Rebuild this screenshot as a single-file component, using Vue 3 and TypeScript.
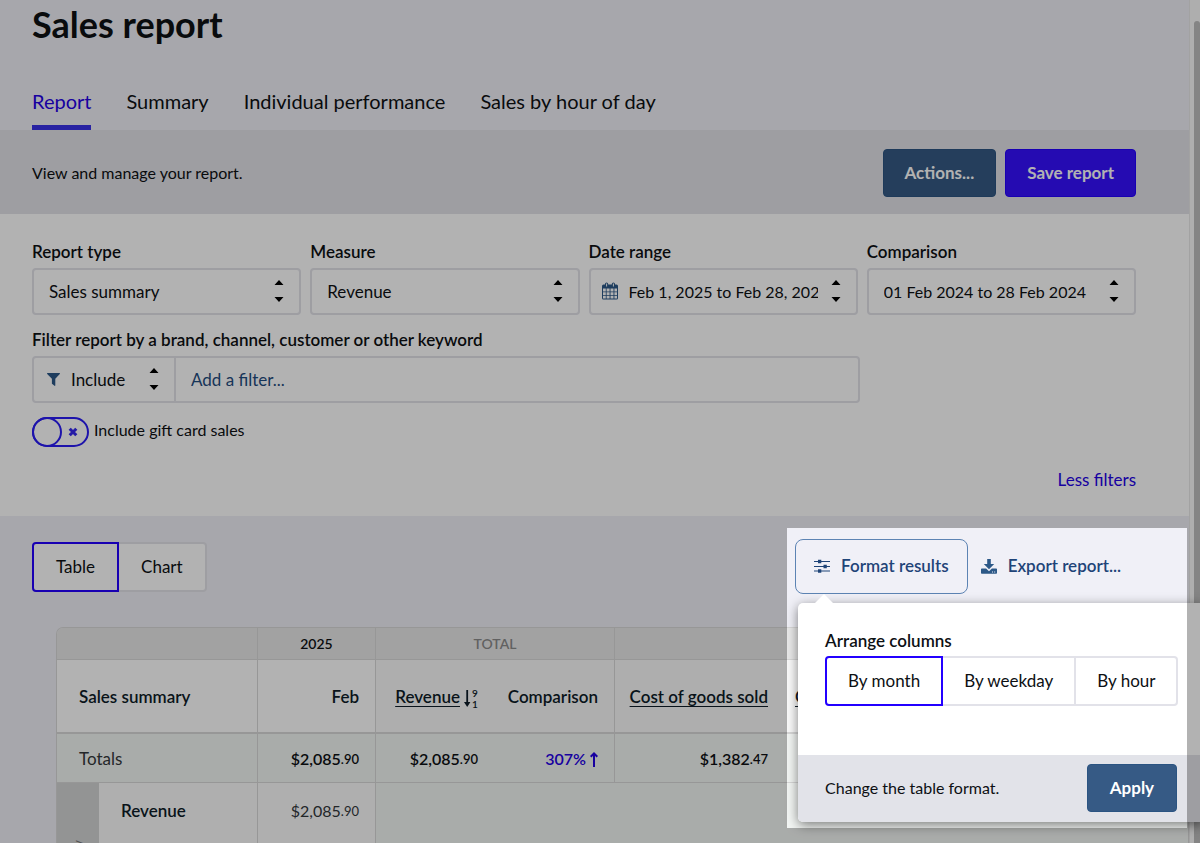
<script setup lang="ts">
import { ref } from 'vue'

const tabs = ['Report', 'Summary', 'Individual performance', 'Sales by hour of day']
const activeTab = ref('Report')
const reportType = ref('Sales summary')
const measure = ref('Revenue')
const dateRange = ref('Feb 1, 2025 to Feb 28, 2025')
const comparison = ref('01 Feb 2024 to 28 Feb 2024')
const filterMode = ref('Include')
const filterText = ref('')
const giftCards = ref(false)
const view = ref('Table')
const arrange = ref('By month')
</script>

<template>
  <div class="app">
    <main class="page">
      <header class="top">
        <h1>Sales report</h1>
        <nav class="tabs">
          <a v-for="t in tabs" :key="t" href="#" :class="{ active: t === activeTab }" @click.prevent="activeTab = t">{{ t }}</a>
        </nav>
      </header>

      <section class="band">
        <p>View and manage your report.</p>
        <div class="band-actions">
          <button class="btn navy" type="button">Actions...</button>
          <button class="btn blue" type="button">Save report</button>
        </div>
      </section>

      <form class="filters" @submit.prevent>
        <div class="fields">
          <div class="field">
            <label for="type">Report type</label>
            <div class="control">
              <select id="type" v-model="reportType"><option>Sales summary</option></select>
              <svg class="arrows" viewBox="0 0 10 24"><path d="M5 1l4.5 5h-9zM5 23l4.5-5h-9z" /></svg>
            </div>
          </div>
          <div class="field">
            <label for="measure">Measure</label>
            <div class="control">
              <select id="measure" v-model="measure"><option>Revenue</option></select>
              <svg class="arrows" viewBox="0 0 10 24"><path d="M5 1l4.5 5h-9zM5 23l4.5-5h-9z" /></svg>
            </div>
          </div>
          <div class="field">
            <label for="range">Date range</label>
            <div class="control dated">
              <svg class="calendar" viewBox="0 0 16 18">
                <path fill-rule="evenodd" d="M1.5 2.5H3V2a1.6 1.6 0 0 1 3.200 0v.5h3.600V2a1.600 1.600 0 0 1 3.200 0v.5h1.500A1.500 1.500 0 0 1 16 4v12a1.500 1.500 0 0 1-1.500 1.500h-13A1.500 1.500 0 0 1 0 16V4a1.500 1.500 0 0 1 1.500-1.500zM1 6.500v3h2.800v-3zm3.600 0v3h3v-3zm3.900 0v3h3v-3zm3.900 0v3H15v-3zM1 10.200V13h2.800v-2.800zm3.600 0V13h3v-2.800zm3.900 0V13h3v-2.800zm3.900 0V13H15v-2.800zM1 13.800v2.700h2.800v-2.700zm3.600 0v2.700h3v-2.700zm3.900 0v2.700h3v-2.700zm3.900 0v2.700H15v-2.700zM4.100 1.600v3h1v-3zm6.800 0v3h1v-3z" />
              </svg>
              <input id="range" v-model="dateRange" type="text" />
              <svg class="arrows" viewBox="0 0 10 24"><path d="M5 1l4.500 5h-9zM5 23l4.500-5h-9z" /></svg>
            </div>
          </div>
          <div class="field">
            <label for="compare">Comparison</label>
            <div class="control compared">
              <select id="compare" v-model="comparison"><option>01 Feb 2024 to 28 Feb 2024</option></select>
              <svg class="arrows" viewBox="0 0 10 24"><path d="M5 1l4.500 5h-9zM5 23l4.500-5h-9z" /></svg>
            </div>
          </div>
        </div>

        <div class="field keyword">
          <label for="keyword">Filter report by a brand, channel, customer or other keyword</label>
          <div class="joined">
            <div class="control mode">
              <svg class="funnel" viewBox="0 0 13 13"><path d="M.4 0h12.200q.6.4.2 1L8.300 5.800V12.500q-.2.700-.8.300L4.900 10.800V5.800L.2 1Q-.2.400.4 0z" /></svg>
              <select v-model="filterMode" aria-label="Filter mode"><option>Include</option><option>Exclude</option></select>
              <svg class="arrows" viewBox="0 0 10 24"><path d="M5 1l4.500 5h-9zM5 23l4.500-5h-9z" /></svg>
            </div>
            <input id="keyword" v-model="filterText" class="text" type="text" placeholder="Add a filter..." />
          </div>
        </div>

        <label class="toggle">
          <input v-model="giftCards" type="checkbox" />
          <span class="track">
            <span class="knob"></span>
            <svg viewBox="0 0 10 10"><path d="M1.700 1.700l6.600 6.600M8.300 1.700L1.700 8.300" /></svg>
          </span>
          <span class="caption">Include gift card sales</span>
        </label>

        <a class="less" href="#" @click.prevent>Less filters</a>
      </form>

      <section class="results">
        <div class="toolbar">
          <div class="segments">
            <button v-for="v in ['Table', 'Chart']" :key="v" type="button" :class="{ on: v === view }" @click="view = v">{{ v }}</button>
          </div>
          <div class="tools">
            <button class="format" type="button">
              <svg viewBox="0 0 16 14">
                <path d="M0 2.500h16M0 7.500h16M0 12h16" fill="none" stroke="currentColor" stroke-width="1" />
                <path d="M4 .8h3.300v3.400H4zM9.500 5.800h3.300v3.400H9.500zM4 10.300h3.300v3.400H4z" />
              </svg>
              Format results
            </button>
            <button class="export" type="button">
              <svg viewBox="0 0 16 15">
                <path d="M6.200 0h3.600v5h3.400L8 10.200 2.800 5h3.400z" />
                <path fill-rule="evenodd" d="M.8 9.500h4.300L8 12.200l2.900-2.700h4.300q.8 0 .8.800v3.600q0 .8-.8.800H.8q-.8 0-.8-.8v-3.600q0-.8.800-.8zM11 12.400v1h1v-1zm2.200 0v1h1v-1z" />
              </svg>
              Export report...
            </button>
            <div class="popover" role="dialog" aria-label="Format results">
              <div class="popover-body">
                <h2>Arrange columns</h2>
                <div class="segments">
                  <button v-for="a in ['By month', 'By weekday', 'By hour']" :key="a" type="button" :class="{ on: a === arrange }" @click="arrange = a">{{ a }}</button>
                </div>
              </div>
              <footer>
                <p>Change the table format.</p>
                <button class="btn apply" type="button">Apply</button>
              </footer>
            </div>
            <div class="spotlight"></div>
          </div>
        </div>

        <div class="table-wrap">
          <table>
            <colgroup>
              <col class="c-side" /><col class="c-name" /><col class="c-feb" /><col class="c-rev" /><col class="c-comp" /><col class="c-cost" /><col />
            </colgroup>
            <thead>
              <tr class="groups">
                <th colspan="2"></th>
                <th>2025</th>
                <th colspan="2" class="muted">TOTAL</th>
                <th colspan="2"></th>
              </tr>
              <tr class="heads">
                <th colspan="2" class="name">Sales summary</th>
                <th>Feb</th>
                <th class="tint open">
                  <a href="#" @click.prevent>Revenue</a>
                  <svg class="sort" viewBox="0 0 14 20">
                    <path d="M3.200 1v15" />
                    <path class="head" d="M0 13h6.400L3.200 18z" />
                    <text x="8" y="8">9</text><text x="8" y="19">1</text>
                  </svg>
                </th>
                <th class="tint">Comparison</th>
                <th class="tint open"><a href="#" @click.prevent>Cost of goods sold</a></th>
                <th class="tint left"><a href="#" @click.prevent>Gross profit</a></th>
              </tr>
            </thead>
            <tbody>
              <tr class="totals">
                <td colspan="2" class="name">Totals</td>
                <td>$2,085<small>.90</small></td>
                <td class="open">$2,085<small>.90</small></td>
                <td class="up">307%<svg viewBox="0 0 8 15"><path d="M4 15V2M.7 4.800L4 1.500l3.300 3.300" /></svg></td>
                <td class="open">$1,382<small>.47</small></td>
                <td></td>
              </tr>
              <tr class="detail">
                <th class="side"><span>Profitability</span></th>
                <th class="name">Revenue</th>
                <td>$2,085<small>.90</small></td>
                <td class="blank" colspan="4"></td>
              </tr>
            </tbody>
          </table>
        </div>
      </section>
    </main>
    <div class="scrollbar"><div class="thumb"></div></div>
  </div>
</template>

<style>
html,
body {
  overflow: hidden;
}
</style>

<style scoped>
* {
  box-sizing: border-box;
}
.app {
  display: grid;
  grid-template-columns: 1fr 11px;
  height: 100vh;
  overflow: hidden;
  background: #f0f0f7;
  color: #0d1013;
  font-family: Lato, "Liberation Sans", sans-serif;
  font-size: 17px;
  line-height: 24px;
}
h1,
h2,
p {
  margin: 0;
}
p,
.caption {
  font-size: 16px;
}
button,
input,
select {
  font: inherit;
  color: inherit;
}
a {
  color: inherit;
}
.page {
  min-width: 0;
}
.top {
  padding: 2px 32px 0;
}
h1 {
  font-size: 36px;
  line-height: 44px;
  font-weight: 700;
}
.tabs {
  display: flex;
  gap: 35px;
  margin-top: 38px;
}
.tabs a {
  height: 46px;
  font-size: 20px;
  line-height: 34px;
  text-decoration: none;
  border-bottom: 5px solid transparent;
}
.tabs a.active {
  color: #2300e6;
  border-color: #3a32e8;
}
.band {
  display: flex;
  align-items: center;
  justify-content: space-between;
  height: 84px;
  padding: 1px 53px 0 32px;
  background: #e2e2e8;
}
.band-actions {
  display: flex;
  gap: 9px;
}
.btn {
  height: 48px;
  padding: 0 21px;
  border: 1px solid;
  border-radius: 4px;
  color: #fff;
  font-weight: 700;
}
.navy,
.apply {
  background: #365a85;
  border-color: #2b5482;
}
.apply {
  padding: 0 22px;
}
.blue {
  background: #3511ff;
  border-color: #2300ff;
}
.filters {
  display: flex;
  flex-direction: column;
  height: 302px;
  padding: 26px 53px 0 32px;
  background: #fff;
}
.fields {
  display: grid;
  grid-template-columns: repeat(4, 1fr);
  gap: 9px;
}
.field label {
  display: block;
  height: 28px;
  font-weight: 600;
}
.control {
  position: relative;
}
.control select,
.control input,
.text {
  appearance: none;
  display: block;
  width: 100%;
  height: 47px;
  padding: 0 38px 0 15px;
  border: 2px solid #e2e2e9;
  border-radius: 4px;
  background: transparent;
  outline: none;
}
.control.dated input {
  padding-left: 38px;
  font-size: 16px;
}
.control.compared select {
  font-size: 16px;
}
.arrows {
  position: absolute;
  right: 17px;
  top: 11px;
  width: 10px;
  height: 24px;
  pointer-events: none;
}
.calendar,
.funnel {
  position: absolute;
  fill: #2c5887;
}
.calendar {
  left: 13px;
  top: 14px;
  width: 16px;
  height: 18px;
}
.funnel {
  left: 15px;
  top: 17px;
  width: 13px;
  height: 13px;
}
.keyword {
  width: 75%;
  margin-top: 13px;
}
.joined {
  display: flex;
}
.mode {
  flex: 0 0 144px;
}
.control.mode select {
  padding-left: 37px;
  border-radius: 4px 0 0 4px;
}
.text {
  flex: 1;
  margin-left: -2px;
  border-radius: 0 4px 4px 0;
}
.text::placeholder {
  color: #1f4c80;
  opacity: 1;
}
.toggle {
  display: flex;
  gap: 5px;
  width: max-content;
  margin-top: 14px;
}
.toggle input {
  position: absolute;
  opacity: 0;
}
.caption {
  line-height: 26px;
}
.track {
  display: flex;
  align-items: center;
  gap: 6px;
  width: 57px;
  height: 30px;
  border: 2px solid #2a1cf5;
  border-radius: 15px;
}
.knob {
  width: 30px;
  height: 30px;
  margin-left: -2px;
  border: 2px solid #2a1cf5;
  border-radius: 50%;
}
.track svg {
  width: 10px;
  height: 10px;
  fill: none;
  stroke: #3528ee;
  stroke-width: 3;
}
.less {
  align-self: flex-end;
  margin-top: 21px;
  color: #2300e6;
  text-decoration: none;
}
.results {
  padding: 23px 0 0 32px;
}
.toolbar {
  display: flex;
  align-items: center;
  justify-content: space-between;
  height: 54px;
  padding-right: 53px;
}
.segments {
  display: flex;
  width: max-content;
}
.segments button {
  height: 50px;
  padding: 0 21px;
  border: 2px solid #e2e2e9;
  background: #fff;
}
.segments button + button {
  margin-left: -2px;
}
.segments button:first-child {
  border-radius: 4px 0 0 4px;
}
.segments button:last-child {
  border-radius: 0 4px 4px 0;
}
.segments .on {
  position: relative;
  border-color: #2300ff;
}
.toolbar > .segments {
  margin-top: 2px;
}
.toolbar > .segments button {
  padding: 0 22px;
}
.tools {
  position: relative;
  display: flex;
}
.format,
.export {
  display: flex;
  align-items: center;
  gap: 11px;
  height: 55px;
  border: 0;
  background: none;
  color: #1f4478;
  font-weight: 600;
}
.format {
  padding: 0 18px;
  border: 1px solid #5c83b3;
  border-radius: 8px;
}
.export {
  padding: 0 15px 0 13px;
}
.format svg {
  width: 16px;
  height: 14px;
  fill: currentColor;
}
.export svg {
  width: 16px;
  height: 15px;
  fill: #2c5887;
}
.popover {
  position: absolute;
  z-index: 5;
  left: 3px;
  top: 64px;
  width: 406px;
  border-radius: 5px;
  background: #fff;
  box-shadow: 0 3px 12px rgba(0, 0, 0, 0.5);
}
.popover::before {
  content: "";
  position: absolute;
  left: 17px;
  top: -9px;
  border: 9px solid transparent;
  border-top: 0;
  border-bottom-color: #fff;
}
.popover-body {
  height: 152px;
  padding: 26px 27px 0;
}
.popover h2 {
  height: 27px;
  font-size: 17px;
  line-height: 24px;
  font-weight: 600;
}
.popover footer {
  display: flex;
  align-items: center;
  justify-content: space-between;
  height: 67px;
  padding: 0 27px;
  border-radius: 0 0 5px 5px;
  background: #e2e3e9;
}
/* Clear window over the format tools; everything around it is dimmed. */
.spotlight {
  position: absolute;
  z-index: 9;
  left: -8px;
  top: -11px;
  width: 400px;
  height: 300px;
  box-shadow: 0 0 0 2000px rgba(0, 0, 0, 0.3);
  pointer-events: none;
}
.table-wrap {
  margin: 34px 0 0 24px;
  overflow: hidden;
  border: 1px solid #d8d8d8;
  border-right: 0;
  border-radius: 7px 0 0 0;
}
table {
  width: 100%;
  table-layout: fixed;
  border-collapse: separate;
  border-spacing: 0;
}
.c-side {
  width: 42px;
}
.c-name {
  width: 159px;
}
.c-feb {
  width: 118px;
}
.c-rev {
  width: 118px;
}
.c-comp {
  width: 121px;
}
.c-cost {
  width: 169px;
}
th,
td {
  padding: 2px 16px 0 8px;
  border: 0 solid #d8d8d8;
  border-width: 0 1px 1px 0;
  background: #fff;
  font-weight: 600;
  text-align: right;
  white-space: nowrap;
}
td {
  font-size: 16px;
}
.groups th {
  height: 32px;
  padding: 0 16px;
  background: #e9e9e9;
  font-size: 14px;
  text-align: center;
}
.groups .muted {
  color: #8c8c8c;
}
.heads th {
  height: 74px;
  border-bottom-width: 2px;
  color: #0e1c28;
}
.heads .tint {
  background: #fafafa;
}
th.left {
  text-align: left;
  padding-left: 11px;
}
th.open,
td.open {
  border-right-width: 0;
}
th.name,
td.name {
  padding-left: 22px;
  text-align: left;
  font-size: 17px;
}
.heads a {
  text-underline-offset: 3px;
}
.sort {
  width: 14px;
  height: 20px;
  margin: -2px 0 -2px 4px;
  vertical-align: -4px;
  fill: #0e1c28;
}
.sort path {
  fill: none;
  stroke: #0e1c28;
  stroke-width: 1.8;
}
.sort .head {
  fill: #0e1c28;
  stroke: none;
}
.sort text {
  font-size: 10px;
}
.totals td {
  height: 49px;
  background: #f3f6f4;
}
.totals .name {
  font-weight: 400;
  color: #33383b;
}
.totals .up {
  color: #2300e6;
}
.up svg {
  width: 8px;
  height: 15px;
  margin-left: 4px;
  vertical-align: -2px;
  fill: none;
  stroke: currentColor;
  stroke-width: 2;
}
small {
  font-size: 13px;
  vertical-align: 1px;
}
.detail th,
.detail td {
  height: 160px;
  padding-top: 16px;
  background: #fbfbfb;
  vertical-align: top;
}
.detail td {
  font-weight: 400;
  color: #33383b;
}
.detail .name {
  color: #0e1c28;
}
.detail .side {
  padding: 57px 0 0;
  border-right: 0;
  background: #d3d5d4;
  color: #777;
  font-size: 15px;
  font-weight: 400;
  text-align: center;
}
.side span {
  writing-mode: vertical-rl;
  transform: rotate(180deg);
}
.detail .blank {
  background: #f3f6f4;
}
.scrollbar {
  border-left: 1px solid #e8e8e8;
  background: #fafafa;
}
.thumb {
  height: 100%;
  margin: 21px 0 0 4px;
  border-radius: 4px 4px 0 0;
  background: #bdbdbd;
}
</style>
